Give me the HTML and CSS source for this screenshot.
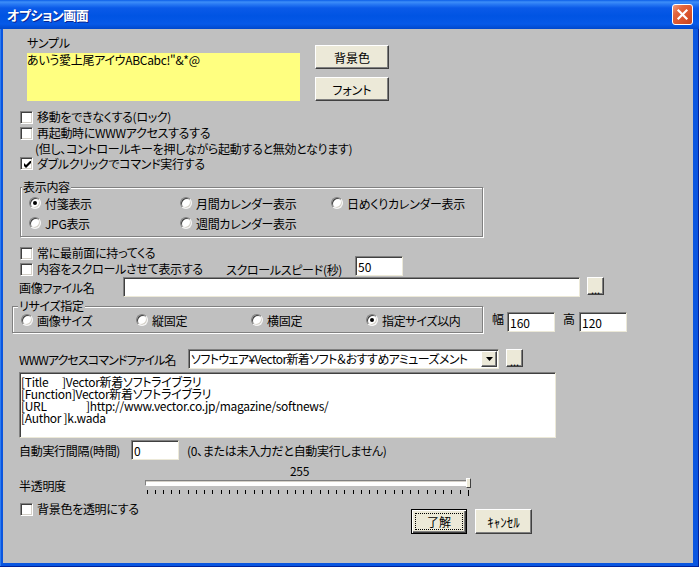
FILE: index.html
```html
<!DOCTYPE html>
<html lang="ja">
<head>
  <meta charset="UTF-8">
  <title>オプション画面</title>
  <link rel="stylesheet" href="styles.css">
</head>
<body>

<div class="window">
  <div class="titlebar">
    <span class="title">オプション画面</span>
    <span class="close">
      <svg width="13" height="13" viewBox="0 0 13 13"><path d="M2.5 2.5 L10.5 10.5 M10.5 2.5 L2.5 10.5" stroke="#fff" stroke-width="2.2" stroke-linecap="square"/></svg>
    </span>
  </div>

  <div class="client">
    <div class="row sample-row">
      <div class="sample">
        <div class="sample-label">サンプル</div>
        <div class="sample-box">あいう愛上尾アイウABCabc!"&amp;*@</div>
      </div>
      <div class="side-buttons">
        <button class="btn side">背景色</button>
        <button class="btn side">フォント</button>
      </div>
    </div>

    <div class="row line cb1">
      <label class="check"><span class="box"></span>移動をできなくする(ロック)</label>
    </div>
    <div class="row line">
      <label class="check"><span class="box"></span>再起動時にWWWアクセスするする</label>
    </div>
    <div class="row note">(但し、コントロールキーを押しながら起動すると無効となります)</div>
    <div class="row line cb3">
      <label class="check"><span class="box on"><svg width="7" height="7" viewBox="0 0 7 7"><path d="M0 2 L2 4 L7 -1 L7 2 L2 7 L0 5 Z" fill="#000"/></svg></span>ダブルクリックでコマンド実行する</label>
    </div>

    <div class="group show-group">
      <div class="group-label lbl-show">表示内容</div>
      <div class="radio-grid grid-show">
        <span class="opt"><span class="radio on"></span>付箋表示</span>
        <span class="opt"><span class="radio"></span>月間カレンダー表示</span>
        <span class="opt"><span class="radio"></span>日めくりカレンダー表示</span>
        <span class="opt"><span class="radio"></span>JPG表示</span>
        <span class="opt"><span class="radio"></span>週間カレンダー表示</span>
      </div>
    </div>

    <div class="row line top-line">
      <label class="check"><span class="box"></span>常に最前面に持ってくる</label>
    </div>
    <div class="row line">
      <label class="check scroll-check"><span class="box"></span>内容をスクロールさせて表示する</label>
      <span class="speed-label">スクロールスピード(秒)</span>
      <input class="field small speed" type="text" value="50">
    </div>

    <div class="row field-row">
      <span class="label file-label">画像ファイル名</span>
      <input class="field file" type="text" value="">
      <button class="btn dots">...</button>
    </div>

    <div class="row resize-row">
      <div class="group resize-group">
        <div class="group-label lbl-resize">リサイズ指定</div>
        <div class="radio-grid grid-resize">
          <span class="opt"><span class="radio"></span>画像サイズ</span>
          <span class="opt"><span class="radio"></span>縦固定</span>
          <span class="opt"><span class="radio"></span>横固定</span>
          <span class="opt"><span class="radio on"></span>指定サイズ以内</span>
        </div>
      </div>
      <span class="size-label w-label">幅</span>
      <input class="field small size-input" type="text" value="160">
      <span class="size-label h-label">高</span>
      <input class="field small size-input h-input" type="text" value="120">
    </div>

    <div class="row field-row www-row">
      <span class="label www-label">WWWアクセスコマンドファイル名</span>
      <div class="field combo">
        <span class="combo-text">ソフトウェア¥Vector新着ソフト＆おすすめアミューズメント</span>
        <span class="drop"><svg width="7" height="4" viewBox="0 0 7 4"><path d="M0 0 H7 L3.5 4 Z" fill="#000"/></svg></span>
      </div>
      <button class="btn dots www-dots">...</button>
    </div>

    <div class="field memo"><span class="key k-title">[Title   </span>]Vector新着ソフトライブラリ
<span class="key">[Function</span>]Vector新着ソフトライブラリ
<span class="key k-url">[URL    </span>]http://www.vector.co.jp/magazine/softnews/
<span class="key k-author">[Author </span>]k.wada</div>

    <div class="row field-row auto-row">
      <span class="label auto-label">自動実行間隔(時間)</span>
      <input class="field small" type="text" value="0">
      <span class="auto-note">(0、または未入力だと自動実行しません)</span>
    </div>

    <div class="row value-row">255</div>

    <div class="row slider-row">
      <span class="label alpha-label">半透明度</span>
      <div class="slider">
        <div class="track"></div>
        <div class="thumb"></div>
        <svg class="ticks" width="326" height="7" viewBox="0 0 326 7">
          <path stroke="#000" stroke-width="1" d="M2.5 0v4M10.5 0v4M18.5 0v4M26.5 0v4M34.5 0v4M43.5 0v4M51.5 0v4M59.5 0v4M67.5 0v4M76.5 0v4M84.5 0v4M92.5 0v4M100.5 0v4M109.5 0v4M117.5 0v4M125.5 0v4M133.5 0v4M142.5 0v4M150.5 0v4M158.5 0v4M166.5 0v4M175.5 0v4M183.5 0v4M191.5 0v4M199.5 0v4M208.5 0v4M216.5 0v4M224.5 0v4M232.5 0v4M240.5 0v4M249.5 0v4M257.5 0v4M265.5 0v4M273.5 0v4M282.5 0v4M290.5 0v4M298.5 0v4M306.5 0v4M315.5 0v4M323.5 0v6"/>
        </svg>
      </div>
    </div>

    <div class="bottom-row">
      <label class="check"><span class="box"></span>背景色を透明にする</label>
      <div class="ok-cancel">
        <button class="btn default"><span class="focus">了解</span></button>
        <button class="btn cancel">ｷｬﾝｾﾙ</button>
      </div>
    </div>
  </div>
</div>

</body>
</html>
```

FILE: styles.css
```css
body { margin: 0; font-family: "Noto Sans CJK JP", "Noto Sans", sans-serif; font-size: 12px; font-feature-settings: "palt"; letter-spacing: -0.3px; color: #000; }

.window {
  width: 699px; height: 567px;
  display: flex; flex-direction: column;
  background: #0a56e0;
  box-shadow: inset -1px 0 #00229a, inset 0 -1px #00229a, inset 1px 0 #2f7cf0;
}
.titlebar {
  height: 29px; flex: none;
  display: flex; align-items: center;
  padding-left: 7px;
  background: linear-gradient(#0b5ee8 0, #3d8ef8 2px, #2a7bf4 4px, #0a5ae8 8px, #0054e3 16px, #0659e8 24px, #0048cc 29px);
}
.title { color: #fff; font-weight: bold; font-size: 13px; letter-spacing: -0.5px; text-shadow: 1px 1px #0b2590; }
.close {
  margin-left: auto; margin-right: 6px;
  width: 21px; height: 21px; box-sizing: border-box;
  border: 1px solid #fff; border-radius: 3px;
  background: linear-gradient(135deg, #f39d7f 0%, #e3643c 30%, #d9532c 65%, #c4431f 100%);
  display: flex; align-items: center; justify-content: center;
}

.client {
  flex: 1;
  margin: 0 6px 4px 3px;
  background: #c0c0c0;
  display: flex; flex-direction: column;
}
.row { display: flex; flex: none; align-items: center; white-space: nowrap; }

/* sample */
.sample-row { margin-top: 5px; align-items: flex-start; }
.sample { margin-left: 24px; }
.sample-label { height: 17px; line-height: 17px; }
.sample-box { margin-top: 2px; width: 273px; height: 48px; background: #ffff80; line-height: 14px; }
.side-buttons { margin: 11px 0 0 15px; display: flex; flex-direction: column; gap: 8px; }

/* buttons */
.btn {
  box-sizing: border-box;
  background: #ece9d8;
  border: 1px solid; border-color: #fff #404040 #404040 #fff;
  box-shadow: inset -1px -1px #808080;
  padding: 0; margin: 0;
  font: inherit; color: #000;
}
.btn.side { width: 74px; height: 24px; }
.btn.dots { width: 17px; height: 18px; margin-left: 7px; line-height: 18px; font-size: 11px; align-self: flex-start; padding-top: 2px; letter-spacing: 0; }
.btn.default {
  width: 56px; height: 25px;
  border: 1px solid #000;
  box-shadow: inset 1px 1px #fff, inset -1px -1px #404040, inset -2px -2px #808080;
  display: flex; padding: 3px;
}
.btn.default .focus { flex: 1; border: 1px dotted #000; line-height: 15px; }
.btn.cancel { width: 57px; height: 25px; font-size: 13px; }

/* checkbox and radio */
.line { height: 16px; }
.cb1 { margin-top: 8px; }
.cb3 { height: 17px; }
.note { height: 14px; margin-left: 32px; }
.check { display: flex; align-items: center; gap: 4px; margin-left: 17px; line-height: 16px; white-space: nowrap; }
.box {
  width: 13px; height: 13px; box-sizing: border-box; flex: none;
  background: #fff;
  border: 1px solid; border-color: #808080 #fff #fff #808080;
  box-shadow: inset 1px 1px #404040, inset -1px -1px #d4d0c8;
  display: flex; align-items: center; justify-content: center;
}
.box svg { margin: 1px 0 0 1px; }
.radio {
  width: 12px; height: 12px; box-sizing: border-box; flex: none;
  border-radius: 50%;
  background: #fff;
  border: 1px solid; border-color: #808080 #f4f4f4 #f4f4f4 #808080;
  box-shadow: inset 1px 1px #404040, inset -1px -1px #d4d0c8;
  display: flex; align-items: center; justify-content: center;
}
.radio.on::after { content: ""; width: 4px; height: 4px; border-radius: 50%; background: #000; }
.opt { display: flex; align-items: center; gap: 4px; white-space: nowrap; }

/* group boxes */
.group {
  box-sizing: border-box; flex: none;
  border: 1px solid #808080;
  box-shadow: inset 1px 1px #fff, 1px 1px #fff;
}
.group-label { width: max-content; margin-top: -8px; padding: 0 1px; background: #c0c0c0; line-height: 14px; }
.lbl-show { margin-left: 1px; }
.lbl-resize { margin-left: 5px; }
.show-group { margin: 15px 0 0 17px; width: 463px; height: 50px; }
.radio-grid { display: grid; margin-left: 8px; }
.grid-show { grid-template-columns: 151px 151px auto; row-gap: 4px; margin-top: 1px; }
.grid-show .opt { height: 16px; }
.grid-resize { grid-template-columns: 115px 115px 115px auto; }
.grid-resize .opt { height: 14px; }

.top-line { margin-top: 8px; }
.scroll-check { width: 206px; }
.speed-label { width: 129px; }
.field {
  box-sizing: border-box;
  background: #fff;
  border: 1px solid; border-color: #808080 #ece9d8 #ece9d8 #808080;
  box-shadow: inset 1px 1px #404040;
  font: inherit; color: #000;
  padding: 0 2px; margin: 0;
  outline: none;
}
.field.small { width: 48px; height: 20px; }
.speed { align-self: flex-start; margin-top: -5px; }

.field-row { height: 20px; }
.label { margin-left: 16px; flex: none; }
.file-label { width: 104px; }
.field.file { width: 457px; height: 20px; }

.resize-row { margin-top: 9px; align-items: flex-start; height: 27px; }
.resize-group { margin-left: 9px; width: 471px; height: 27px; padding-bottom: 5px; }
.size-label { margin-top: 6px; line-height: 14px; width: 12px; margin-left: 9px; }
.h-label { margin-left: 8px; }
.size-input { margin: 6px 0 0 3px; }
.h-input { margin-left: 4px; }

.www-row { margin-top: 16px; }
.www-label { width: 169px; letter-spacing: -0.9px; }
.combo { width: 311px; height: 20px; display: flex; align-items: center; padding: 0 0 0 2px; overflow: hidden; }
.combo-text { flex: 1; white-space: nowrap; overflow: hidden; line-height: 16px; letter-spacing: -0.6px; }
.drop {
  width: 16px; height: 16px; box-sizing: border-box; flex: none; margin-right: 1px;
  background: #ece9d8;
  border: 1px solid; border-color: #fff #404040 #404040 #fff;
  box-shadow: inset -1px -1px #808080;
  display: flex; align-items: center; justify-content: center;
}
.www-dots { margin-left: 8px; }

.memo {
  margin: 3px 0 0 16px;
  width: 537px; height: 66px;
  padding: 3px 1px;
  line-height: 12px;
  white-space: pre;
}
.key { display: inline-block; white-space: pre; vertical-align: top; }
.k-title { min-width: 41px; }
.k-url { min-width: 65px; }
.k-author { min-width: 42px; }

.auto-row { margin-top: 2px; }
.auto-label { width: 112px; }
.auto-note { margin-left: 8px; }

.value-row { margin: 2px 0 0 287px; height: 16px; }

.slider-row { height: 18px; align-items: flex-start; }
.alpha-label { width: 126px; line-height: 16px; }
.slider { position: relative; width: 326px; height: 18px; }
.track {
  margin-top: 2px; height: 6px; box-sizing: border-box;
  background: #fff;
  border: 1px solid; border-color: #808080 #fff #fff #808080;
  box-shadow: inset 0 1px #d4d0c8;
}
.thumb {
  position: absolute; left: 321px; top: 0;
  width: 5px; height: 10px; box-sizing: border-box;
  background: #ece9d8;
  border: 1px solid; border-color: #fff #404040 #404040 #fff;
}
.ticks { display: block; margin-top: 4px; }

.bottom-row { display: grid; grid-template-columns: 408px auto; margin-top: 5px; align-items: start; }
.bottom-row .check { height: 16px; }
.ok-cancel { display: flex; gap: 8px; margin-top: 8px; }
```
